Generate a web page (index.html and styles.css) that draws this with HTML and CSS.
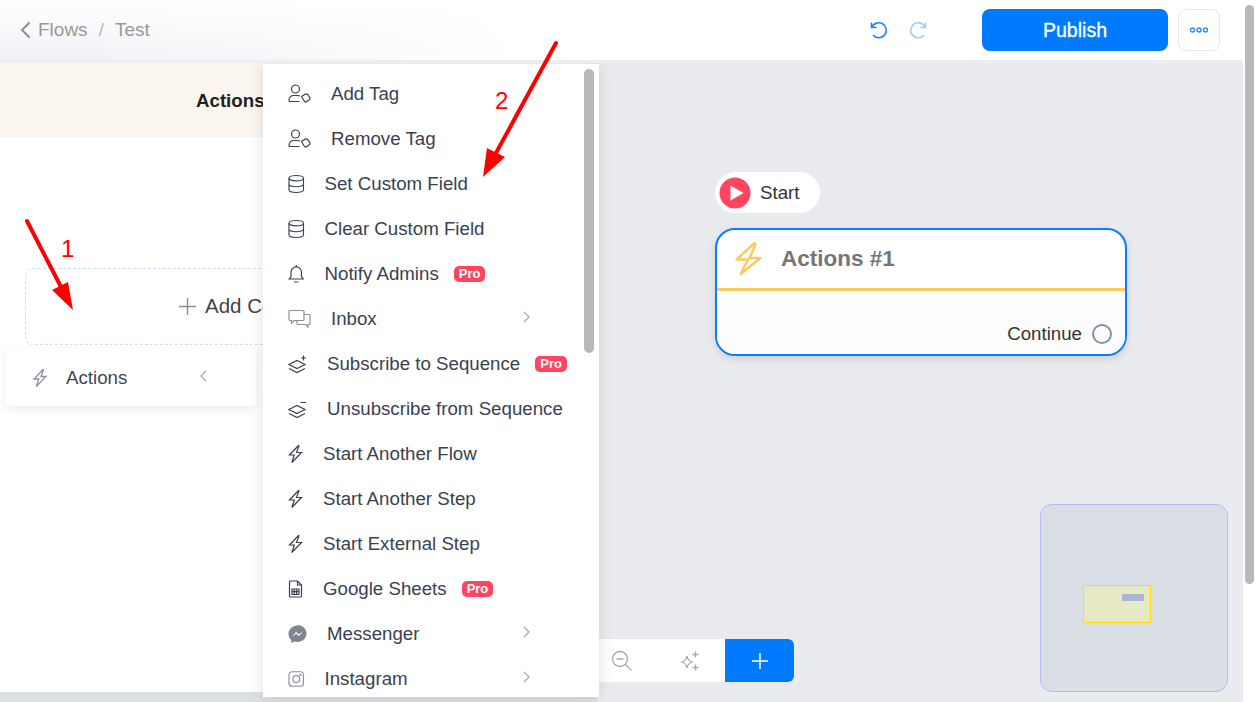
FILE: index.html
```html
<!DOCTYPE html>
<html lang="en">
<head>
    <meta charset="UTF-8">
    <meta name="viewport" content="width=device-width, initial-scale=1.0">
    <title>Flows / Test</title>
    <link rel="stylesheet" href="styles.css">
</head>
<body>
    <svg class="icon-defs" width="0" height="0">
        <symbol id="i-tag" viewBox="0 0 23 20"><circle cx="7.500" cy="5" r="4"/><path d="M1 17.500v-1.500a4.500 4.500 0 0 1 4.500-4.500h4q1.500 0 2.500.5M1 17.500h10.500"/><path d="M13.500 12.500l4-2.500 2 .3 2.500 3.700-.3 1.500-3.500 2.500-1.500-.3z"/></symbol>
        <symbol id="i-db" viewBox="0 0 17 20"><ellipse cx="8.500" cy="4" rx="7.500" ry="2.800"/><path d="M1 4v12c0 1.600 3.400 2.800 7.500 2.800S16 17.600 16 16V4M1 10c0 1.600 3.400 2.800 7.500 2.800S16 11.600 16 10"/></symbol>
        <symbol id="i-bell" viewBox="0 0 16 20"><path d="M1 15h14l-1.800-2.500V8a5.200 5.200 0 0 0-10.400 0v4.500zM8 2.800V1M5.800 18h4.400"/></symbol>
        <symbol id="i-chat" viewBox="0 0 23 20"><path d="M2 1.500h13a1 1 0 0 1 1 1v8a1 1 0 0 1-1 1H6L3.500 14v-2.500H2a1 1 0 0 1-1-1v-8a1 1 0 0 1 1-1z"/><path d="M16 5.500h5a1 1 0 0 1 1 1v8a1 1 0 0 1-1 1h-1V18l-2.500-2.500H10a1 1 0 0 1-1-1v-3"/></symbol>
        <symbol id="i-layers-add" viewBox="0 0 19 20"><path d="M1 10.500l8-4 8 4-8 4zM1 14.500l8 4 8-4M15.500 1.500v5M13 4h5"/></symbol>
        <symbol id="i-layers-sub" viewBox="0 0 19 20"><path d="M1 10.500l8-4 8 4-8 4zM1 14.500l8 4 8-4M12.500 3.500h5.500"/></symbol>
        <symbol id="i-bolt" viewBox="0 0 15 20"><path d="M10.500 1.500L1.500 11h4.800L3.800 18.500 13.500 8.500H8.500l2.500-6.500z"/></symbol>
        <symbol id="i-sheet" viewBox="0 0 14 20"><path d="M1 3a1 1 0 0 1 1-1h7l4 4v11a1 1 0 0 1-1 1H2a1 1 0 0 1-1-1zM9 2v4h4"/><path d="M3.500 10h7v5.500h-7zM3.500 12.700h7M5.800 10v5.500M8.200 10v5.500"/></symbol>
        <symbol id="i-insta" viewBox="0 0 17 20"><rect x="1" y="2.500" width="15" height="15" rx="3.500"/><circle cx="8.500" cy="10" r="3.500"/><circle cx="12.800" cy="5.800" r=".6"/></symbol>
    </svg>

    <div class="page">
        <header class="topbar">
            <nav class="crumbs">
                <svg class="crumb-back" width="11" height="18" viewBox="0 0 11 18"><path d="M9.500 1.500L2 9l7.500 7.500"/></svg>
                <span>Flows</span>
                <span class="crumb-sep">/</span>
                <span>Test</span>
            </nav>
            <div class="history">
                <svg width="20" height="20" viewBox="0 0 20 20"><path d="M2.500 2.500v5h5M2.800 7.500A7.500 7.500 0 1 1 4 15"/></svg>
                <svg class="history-off" width="20" height="20" viewBox="0 0 20 20"><path d="M17.500 2.500v5h-5M17.200 7.500A7.500 7.500 0 1 0 16 15"/></svg>
            </div>
            <button class="publish" type="button">Publish</button>
            <button class="more" type="button">
                <svg width="20" height="6" viewBox="0 0 20 6"><circle cx="3.500" cy="3" r="2"/><circle cx="10" cy="3" r="2"/><circle cx="16.500" cy="3" r="2"/></svg>
            </button>
        </header>

        <main class="workspace">
            <aside class="sidebar">
                <div class="sidebar-head">Actions #1</div>
                <div class="sidebar-body">
                    <div class="add-content">
                        <svg width="17" height="17" viewBox="0 0 17 17"><path d="M8.500 0v17M0 8.500h17"/></svg>
                        <span class="add-label">Add Content</span>
                    </div>
                </div>
            </aside>

            <div class="picker">
                <svg class="picker-icon"><use href="#i-bolt"/></svg>
                <span class="picker-label">Actions</span>
                <svg class="picker-back" width="8" height="12" viewBox="0 0 8 12"><path d="M7 1L2 6l5 5"/></svg>
            </div>

            <section class="canvas">
                <div class="start-pill">
                    <svg width="32" height="32" viewBox="0 0 32 32"><circle cx="16" cy="16" r="15.500" fill="#ff4560"/><path d="M11.500 8.500l13 7.500-13 7.500z" fill="#fff"/></svg>
                    <span>Start</span>
                </div>
                <div class="node">
                    <div class="node-head">
                        <svg width="28" height="34" viewBox="0 0 28 34"><path d="M20 1.500L2.500 17.500h11.500L6.500 32 26.500 16H15.500L21.500 2.500Q21 .5 20 1.500z"/></svg>
                        <span>Actions #1</span>
                    </div>
                    <div class="node-foot">
                        <span>Continue</span>
                        <i class="node-port"></i>
                    </div>
                </div>
                <div class="zoombar">
                    <svg width="22" height="22" viewBox="0 0 22 22"><circle cx="9" cy="9" r="7.500"/><path d="M5.500 9h7M14.500 14.500L20.500 20.500"/></svg>
                    <svg class="zoom-fit" width="22" height="22" viewBox="0 0 22 22"><path d="M8 6q.8 4.500 5 6-4.200 1.500-5 6-.8-4.500-5-6 4.200-1.500 5-6zM16.500 1.500v6M13.500 4.500h6M16.500 14.500v6M13.500 17.500h6"/></svg>
                    <button class="zoom-add" type="button">
                        <svg width="16" height="16" viewBox="0 0 16 16"><path d="M8 0v16M0 8h16"/></svg>
                    </button>
                </div>
                <div class="minimap">
                    <div class="minimap-view"><div class="minimap-node"></div></div>
                </div>
            </section>

            <div class="bottom-strip"></div>

            <div class="menu">
                <ul class="menu-list">
                    <li class="menu-item"><svg class="ic ic-wide"><use href="#i-tag"/></svg>Add Tag</li>
                    <li class="menu-item"><svg class="ic ic-wide"><use href="#i-tag"/></svg>Remove Tag</li>
                    <li class="menu-item"><svg class="ic ic-db"><use href="#i-db"/></svg>Set Custom Field</li>
                    <li class="menu-item"><svg class="ic ic-db"><use href="#i-db"/></svg>Clear Custom Field</li>
                    <li class="menu-item"><svg class="ic ic-db"><use href="#i-bell"/></svg>Notify Admins<span class="pro">Pro</span></li>
                    <li class="menu-item"><svg class="ic ic-wide ic-grey"><use href="#i-chat"/></svg>Inbox<svg class="menu-arrow" width="8" height="12" viewBox="0 0 8 12"><path d="M1 1l5 5-5 5"/></svg></li>
                    <li class="menu-item"><svg class="ic ic-layer"><use href="#i-layers-add"/></svg>Subscribe to Sequence<span class="pro">Pro</span></li>
                    <li class="menu-item"><svg class="ic ic-layer"><use href="#i-layers-sub"/></svg>Unsubscribe from Sequence</li>
                    <li class="menu-item"><svg class="ic ic-bolt"><use href="#i-bolt"/></svg>Start Another Flow</li>
                    <li class="menu-item"><svg class="ic ic-bolt"><use href="#i-bolt"/></svg>Start Another Step</li>
                    <li class="menu-item"><svg class="ic ic-bolt"><use href="#i-bolt"/></svg>Start External Step</li>
                    <li class="menu-item"><svg class="ic ic-bolt"><use href="#i-sheet"/></svg>Google Sheets<span class="pro">Pro</span></li>
                    <li class="menu-item">
                        <svg class="ic ic-layer ic-messenger" viewBox="0 0 19 20"><path d="M9.500 1.500C4.500 1.500.5 5.200.5 10c0 2.500 1.100 4.600 2.800 6v3l3-1.600c1 .3 2.100.5 3.200.5 5 0 9-3.700 9-8.400s-4-8.500-9-8.500z"/><path class="messenger-bolt" d="M4 12.500l4-4.500 2.800 2.200L15 7.500l-4 4.500-2.800-2.200z"/></svg>
                        Messenger<svg class="menu-arrow" width="8" height="12" viewBox="0 0 8 12"><path d="M1 1l5 5-5 5"/></svg>
                    </li>
                    <li class="menu-item"><svg class="ic ic-db ic-grey"><use href="#i-insta"/></svg>Instagram<svg class="menu-arrow" width="8" height="12" viewBox="0 0 8 12"><path d="M1 1l5 5-5 5"/></svg></li>
                </ul>
                <div class="menu-thumb"></div>
            </div>
        </main>
    </div>

    <div class="scrollbar"><div class="scrollbar-thumb"></div></div>

    <!-- red annotations drawn over the screenshot -->
    <svg class="notes" width="1258" height="702" viewBox="0 0 1258 702">
        <path class="note-line" d="M27 221L61 287M556 43L496 153"/>
        <path class="note-head" d="M73 310L52 290L68 282zM483 177L487 148L505 157z"/>
        <text class="note-num" x="61" y="257">1</text>
        <text class="note-num" x="495" y="109">2</text>
    </svg>
</body>
</html>
```

FILE: styles.css
```css
* {
    box-sizing: border-box;
}

body {
    font-family: "Liberation Sans", Arial, sans-serif;
    background-color: #fff;
    color: #3a4150;
    margin: 0;
    width: 1258px;
    height: 702px;
    overflow: hidden;
    display: flex;
    position: relative;
}

svg {
    display: block;
    flex: none;
}

.icon-defs {
    position: absolute;
}

.page {
    flex: 1;
    min-width: 0;
    display: flex;
    flex-direction: column;
}

/* top bar */
.topbar {
    height: 63px;
    padding: 0 23px 0 20px;
    border-bottom: 3px solid #edeef1;
    display: flex;
    align-items: center;
    background: linear-gradient(to right, rgba(255, 255, 255, 0) 5%, #fff 42%), linear-gradient(#fff, #f0f1f6);
    background-repeat: no-repeat;
}

.crumbs {
    display: flex;
    align-items: center;
    font-size: 19px;
    color: #999;
}

.crumb-back {
    margin-right: 7px;
}

.crumb-back path {
    fill: none;
    stroke: #8a8a8a;
    stroke-width: 1.8;
}

.crumb-sep {
    margin: 0 11px;
    color: #b5b8bf;
}

.history {
    margin-left: auto;
    display: flex;
    gap: 19px;
}

.history path {
    fill: none;
    stroke: #1a87ff;
    stroke-width: 1.6;
}

.history .history-off path {
    stroke: #9ccbff;
}

.publish {
    width: 186px;
    height: 42px;
    margin-left: 54px;
    border: none;
    border-radius: 8px;
    background-color: #007bff;
    color: #fff;
    font-family: inherit;
    font-size: 19.500px;
    font-weight: 500;
    -webkit-text-stroke: 0.3px #fff;
}

.more {
    width: 42px;
    height: 42px;
    margin-left: 10px;
    padding: 0;
    border: 1px solid #e3e6ec;
    border-radius: 8px;
    background-color: #fff;
    display: flex;
    align-items: center;
    justify-content: center;
}

.more circle {
    fill: none;
    stroke: #2a8cff;
    stroke-width: 1.4;
}

/* work area */
.workspace {
    flex: 1;
    position: relative;
    display: flex;
    background-color: #e9ebef;
    overflow: hidden;
}

.sidebar {
    width: 590px;
    height: 629px;
    flex: none;
    background-color: #fff;
    display: flex;
    flex-direction: column;
}

.sidebar-head {
    height: 74px;
    padding-left: 196px;
    background-color: #faf5ef;
    color: #222;
    font-size: 18.700px;
    font-weight: 700;
    line-height: 76px;
}

.sidebar-body {
    padding: 131px 25px 0;
}

.add-content {
    height: 77px;
    padding-left: 153px;
    border: 1px dashed #c5e1fb;
    border-radius: 8px;
    display: flex;
    align-items: center;
    gap: 9px;
    font-size: 20.500px;
    color: #444;
}

.add-content path {
    stroke: #8d8d8d;
    stroke-width: 1.4;
}

.add-label {
    margin-bottom: 2px;
}

.picker {
    position: absolute;
    left: 6px;
    top: 286px;
    width: 250px;
    height: 57px;
    padding-left: 26px;
    background-color: #fff;
    border-radius: 3px;
    box-shadow: 0 3px 10px rgba(0, 0, 0, 0.08);
    display: flex;
    align-items: center;
    font-size: 18.700px;
    color: #3f4654;
}

.picker-icon {
    width: 16px;
    height: 20px;
    fill: none;
    stroke: #8b919c;
    stroke-width: 1.3;
}

.picker-label {
    margin-left: 18px;
    padding-top: 1px;
}

.picker-back {
    margin-left: 72px;
    margin-bottom: 3px;
}

.picker-back path,
.menu-arrow path {
    fill: none;
    stroke: #a5a9b0;
    stroke-width: 1.200;
}

/* actions menu */
.menu {
    position: absolute;
    left: 263px;
    top: 1px;
    width: 336px;
    height: 633px;
    background-color: #fff;
    box-shadow: 0 0 14px rgba(0, 0, 0, 0.12);
    overflow: hidden;
}

.menu-list {
    list-style: none;
    margin: 0;
    padding: 7px 0 0 25px;
}

.menu-item {
    height: 45px;
    display: flex;
    align-items: center;
    gap: 20px;
    font-size: 18.700px;
    color: #3a4150;
    white-space: nowrap;
}

.ic {
    height: 20px;
    fill: none;
    stroke: #3a4150;
    stroke-width: 1.200;
}

.ic-wide {
    width: 23px;
}

.ic-db {
    width: 16.500px;
}

.ic-layer {
    width: 19px;
}

.ic-bolt {
    width: 15px;
}

.ic-grey {
    stroke: #8d9199;
}

.ic-messenger {
    fill: #7f8691;
    stroke: none;
}

.messenger-bolt {
    fill: #fff;
}

.pro {
    margin-left: -5px;
    padding: 0 5px;
    height: 16px;
    border-radius: 5px;
    background-color: #ff4560;
    color: #fff;
    font-size: 13px;
    font-weight: 700;
    line-height: 16px;
}

.menu-arrow {
    position: absolute;
    left: 260px;
    margin-top: -4px;
}

.menu-thumb {
    position: absolute;
    left: 321px;
    top: 5px;
    width: 10px;
    height: 284px;
    border-radius: 5px;
    background-color: #b9b9bd;
}

/* flow canvas, nodes sit at their own coordinates */
.canvas {
    flex: 1;
    position: relative;
}

.start-pill {
    position: absolute;
    left: 125px;
    top: 109px;
    width: 105px;
    height: 41px;
    padding-left: 4px;
    border-radius: 21px;
    background-color: #fff;
    display: flex;
    align-items: center;
    gap: 9px;
    font-size: 18.700px;
    color: #333;
}

.node {
    position: absolute;
    left: 125px;
    top: 165px;
    width: 412px;
    height: 128px;
    border: 2px solid #0a7cff;
    border-radius: 20px;
    background-color: #fff;
    box-shadow: 0 3px 8px rgba(0, 0, 0, 0.12);
}

.node-head {
    height: 61px;
    padding-left: 17px;
    border-bottom: 3px solid #ffc95c;
    display: flex;
    align-items: center;
    gap: 19px;
    font-size: 22.500px;
    font-weight: 700;
    color: #757575;
}

.node-head path {
    fill: none;
    stroke: #ffc95c;
    stroke-width: 2.400;
    stroke-linejoin: round;
}

.node-foot {
    height: 63px;
    padding: 22px 13px 0 0;
    display: flex;
    align-items: center;
    justify-content: flex-end;
    gap: 10px;
    font-size: 18.700px;
    color: #333;
    background-color: #fdfdfd;
    border-radius: 0 0 18px 18px;
}

.node-port {
    width: 20px;
    height: 20px;
    border: 2px solid #8492a6;
    border-radius: 50%;
}

.zoombar {
    position: absolute;
    left: 0;
    top: 576px;
    width: 204px;
    height: 43px;
    padding-left: 21px;
    background-color: #fff;
    border-radius: 0 6px 6px 0;
    display: flex;
    align-items: center;
}

.zoombar path,
.zoombar circle {
    fill: none;
    stroke: #a8a8a8;
    stroke-width: 1.300;
}

.zoom-fit {
    margin-left: 46px;
}

.zoom-add {
    width: 69px;
    height: 43px;
    margin-left: 24px;
    padding: 0;
    border: none;
    border-radius: 0 6px 6px 0;
    background-color: #007bff;
    display: flex;
    align-items: center;
    justify-content: center;
}

.zoombar .zoom-add path {
    stroke: #fff;
    stroke-width: 1.500;
}

.minimap {
    position: absolute;
    left: 450px;
    top: 441px;
    width: 188px;
    height: 188px;
    border: 1px solid #b4bcf5;
    border-radius: 12px;
    background-color: #dadee5;
}

.minimap-view {
    position: absolute;
    left: 42px;
    top: 80px;
    width: 68px;
    height: 38px;
    border: 1px solid #ffdf00;
    background-color: #e6e9c5;
}

.minimap-node {
    position: absolute;
    left: 38px;
    top: 8px;
    width: 22px;
    height: 7px;
    background-color: #aab6d2;
}

.bottom-strip {
    position: absolute;
    left: 0;
    bottom: 0;
    width: 597px;
    height: 10px;
    background-color: #dcdfe4;
}

/* window scrollbar */
.scrollbar {
    width: 15px;
    flex: none;
    padding: 5px 4px 0 2px;
    background-color: #fff;
}

.scrollbar-thumb {
    height: 579px;
    border-radius: 5px;
    background-color: #b9b9bd;
}

/* annotations */
.notes {
    position: absolute;
    left: 0;
    top: 0;
}

.note-line {
    fill: none;
    stroke: #f00;
    stroke-width: 4;
    stroke-linecap: round;
}

.note-head {
    fill: #f00;
}

.note-num {
    fill: #f00;
    font-size: 24px;
}
```
